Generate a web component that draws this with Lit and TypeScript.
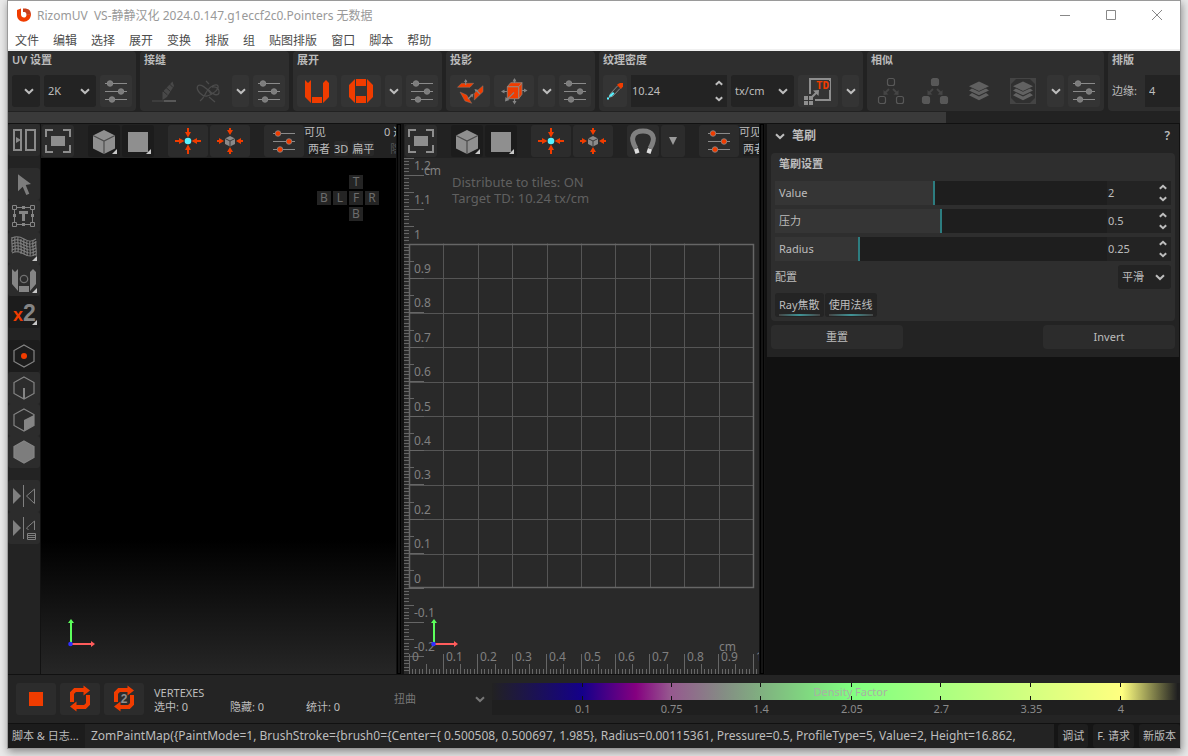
import { LitElement, html, svg, css, nothing } from "lit";
import type { TemplateResult, SVGTemplateResult } from "lit";
import { customElement, property } from "lit/decorators.js";
import { classMap } from "lit/directives/class-map.js";

const icon = (w: number, h: number, body: SVGTemplateResult) =>
  html`<svg class="icon" width=${w} height=${h} viewBox="0 0 ${w} ${h}" aria-hidden="true">${body}</svg>`;

const chevronDown = html`<svg class="chev" width="10" height="7" viewBox="0 0 10 7" aria-hidden="true">
  <path d="M1 1.2 5 5 9 1.2" fill="none" stroke="currentColor" stroke-width="2"/></svg>`;
const stepUp = html`<svg width="8" height="6" viewBox="0 0 8 6" aria-hidden="true">
  <path d="M.8 4.800 4 1.800 7.200 4.800" fill="none" stroke="currentColor" stroke-width="2"/></svg>`;
const stepDown = html`<svg width="8" height="6" viewBox="0 0 8 6" aria-hidden="true">
  <path d="M.8 1.200 4 4.200 7.200 1.200" fill="none" stroke="currentColor" stroke-width="2"/></svg>`;

const more = svg`<path d="M29 24v5h-5z" fill="#c8c8c8"/>`;

const sliders = (knob: string) => icon(32, 32, svg`
  <path d="M5 8.5h22M5 16.5h22M5 24.5h22" stroke="#8a8a8a"/>
  <g fill=${knob} stroke="#8a8a8a" stroke-width=".8">
    <circle cx="10" cy="8.5" r="2.8"/><circle cx="21" cy="16.5" r="2.8"/><circle cx="12" cy="24.5" r="2.8"/>
  </g>`);

const seamPen = icon(40, 32, svg`
  <path d="M8 26h12" stroke="#3d3d3d" stroke-width="2"/><path d="M20 26h12" stroke="#585858" stroke-width="2"/>
  <path d="m18.500 25 0-8 10-10.500 1.500 4.500-7 11z" fill="#484848"/>
  <path d="m19 16 4.500 4M22 12.500l4.500 4M25.500 9l3.500 3.500" stroke="#2e2e2e"/>`);
const seamAuto = icon(40, 32, svg`
  <g fill="none" stroke="#4b4b4b" stroke-width="1.300">
    <path d="M23 19C19 12 11 8 9.500 11.500S14 22 19 21c7-2 12-7 11-10s-8 0-11 5c-2 3-3 7-7 10M24 12c5-1 8 3 7 6s-7 2-10-3M21 22l6 5M18 6l3 3"/>
  </g>`);
const unfoldU = icon(40, 32, svg`<g fill="#f03c00">
  <path d="m8 5 3 3 3-3v23l-6-6zM26 8l3-3 3 3v14l-6 6z"/><path d="M15 22h10v6H15z"/></g>`);
const unfoldO = icon(40, 32, svg`<g fill="#f03c00">
  <path d="m8 10 6-6v24l-6-6zM26 4l6 6v12l-6 6z"/><path d="M15 4h10v7H15zM15 21h10v7H15z"/></g>`);
const projectPlanes = icon(40, 32, svg`
  <g fill="#f03c00" stroke="#8a7a70" stroke-width=".5">
    <path d="m7.500 12.300 4-4h12.200l-3.700 4zM10 17l6.700 3 5 8.300-6.700-2.300zM24.300 18.300l8.700-7.600v6l-8.700 8.300z"/></g>
  <g stroke="#858585" stroke-width="1.200" fill="#858585">
    <path d="M15.700 10V5M27 16l3 3M22 20l-4 4"/><path d="m14 7 1.700-3 1.700 3zM24.500 14l4 1-3 2zM23.500 18.500l-1 4-2.500-2.500z" stroke="none"/></g>`);
const projectCube = icon(40, 32, svg`
  <g fill="#f03c00" stroke="#9a8478" stroke-width=".8">
    <path d="M13.300 11.700h11.400v12H13.300zM13.300 11.700l3.400-4H28l-3.300 4zM24.700 11.700l3.300-4v11.600l-3.300 4.400z"/></g>
  <g stroke="#858585" stroke-width="1.200"><path d="M20.500 8V4M20.500 24v4M13 16.500H8M28 15.500h4M20 17.500l-7 7"/></g>
  <g fill="#858585"><path d="m18.500 6.500 2-3.500 2 3.500zM18.500 26l2 3.500 2-3.500zM10.500 14.500l-3.500 2 3.500 2zM30 13.500l3.500 2-3.500 2zM11.500 22l-.5 4.500 4.500-1.500z"/></g>`);
const eyedropper = icon(24, 32, svg`
  <path d="m15 9 2-1h3v3.500L18 14l-4-4z" fill="#f03c00"/>
  <path d="m14.500 11-7 7.500-1.500 4 4-1.500 7-7.500" fill="none" stroke="#a5a5a5" stroke-width=".7"/>
  <path d="m10 17 1.500 1.500-3 3-2.500.5.500-2z" fill="#59f2ff"/><path d="M4 22.500h2v2H4z" fill="#59f2ff"/>`);
const tdIcon = icon(40, 32, svg`
  <path d="M12 19V4h20v21H17" fill="none" stroke="#8e8e8e" stroke-width="2"/>
  <path d="M17 6h15v9H17z" fill="#353535"/>
  <text x="18" y="14" class="td" fill="#f03c00">TD</text>
  <path d="m14 22 5-5" stroke="#8e8e8e" stroke-width="2"/><path d="m15 15.500 6-.5-.5 6z" fill="#8e8e8e"/>
  <path d="M6 21h4v4H6zM11 21h4v4h-4zM6 26h4v4H6zM11 26h4v4h-4z" fill="#8e8e8e"/>`);
const similar = (fill: string) => icon(40, 32, svg`
  <g fill=${fill} stroke="#585858" stroke-width="1.200">
    <rect x="16.500" y="3.500" width="7" height="7" rx="2"/><rect x="7.500" y="21.500" width="7" height="7" rx="2"/><rect x="25.500" y="21.500" width="7" height="7" rx="2"/></g>
  <path d="m18 14-4 4M22 14l4 4" stroke="#454545" stroke-width="1.800"/>
  <path d="m12.500 15 0 5 5-.5zM27.500 15v5l-5-.5z" fill="#454545"/>`);
const layers = svg`<path d="m20 6.500 10 4.700-10 4.700-10-4.700z"/><path d="m13 13.500 7 3.300 7-3.300 3 2-10 4.800-10-4.800z"/><path d="m13 18 7 3.500 7-3.500 3 2.200-10 5-10-5z"/>`;
const stack = icon(40, 32, svg`<g fill="#606060">${layers}</g>`);
const stackBox = icon(40, 32, svg`<path d="M7 3h26v26H7z" fill="#444"/>
  <path d="M13 4h14l5 5v14l-5 5H13l-5-5V9z" fill="#303030"/><g fill="#626262">${layers}</g>`);

const panels = icon(32, 32, svg`<path d="M6 6h7v20H6zM18 6h9v20h-9z" fill="none" stroke="#8a8a8a" stroke-width="2"/>
  <path d="m8 13 5 3-5 3z" fill="#8a8a8a"/>`);
const frame = icon(32, 32, svg`<path d="M11 5H4v7M21 5h7v7M4 20v7h7M28 20v7h-7" fill="none" stroke="#8e8e8e" stroke-width="2"/>
  <path d="M9 11h14v10H9z" fill="#8e8e8e"/>`);
const cube = icon(32, 32, svg`<path d="m16 5 11 5.500v13L16 29 5 23.500v-13z" fill="#8f8f8f"/>
  <path d="m5 10.500 11 5.500 11-5.500M16 16v13" fill="none" stroke="#4c4c4c" stroke-width="1.200"/>${more}`);
const square = icon(32, 32, svg`<path d="M6 7h20v20H6z" fill="#8f8f8f"/>${more}`);
const focusPoint = icon(40, 32, svg`
  <g stroke="#f03c00" stroke-width="2"><path d="M20 3v5M20 29v-5M7 16h5M33 16h-5"/></g>
  <g fill="#f03c00"><path d="M17 7h6l-3 5.500zM17 25h6l-3-5.500zM11 13v6l5.500-3zM29 13v6l-5.500-3z"/></g>
  <circle cx="20" cy="16" r="3.300" fill="#59f2ff"/>`);
const focusCube = icon(40, 32, svg`
  <g stroke="#f03c00" stroke-width="2"><path d="M20 3v3M20 29v-3M7 16h3M33 16h-3"/></g>
  <g fill="#f03c00"><path d="M17 5h6l-3 5zM17 27h6l-3-5zM9 13v6l5-3zM31 13v6l-5-3z"/></g>
  <path d="m20 11 5 2.500v5.500L20 21.500 15 19v-5.500z" fill="#8a8a8a"/><path d="m15 13.500 5 2.500 5-2.500M20 16v5.500" fill="none" stroke="#3a3a3a"/>`);
const magnet = icon(32, 32, svg`<path d="M9 23.500C2 12 7 6 16 6s14 6 7 17.500" fill="none" stroke="#808080" stroke-width="5"/>
  <path d="m7 24.500 4-1.500 1.500 4.500-4 1.500zM25 24.500 21 23l-1.500 4.500 4 1.500z" fill="#ddd"/>`);
const triangle = icon(24, 32, svg`<path d="M8 12h8l-4 8z" fill="#9a9a9a"/>`);

const cursor = icon(32, 32, svg`<path d="m10 6.300 13 9.700-5.300 1 3.600 8.700-3 1.300-3.600-8.300-4.700 4.600z" fill="#7d7d7d"/>`);
const textBox = icon(32, 32, svg`
  <path d="M6.500 7.500h18v17h-18z" fill="none" stroke="#858585"/>
  <g fill="#2e2e2e" stroke="#858585"><path d="M4.500 5.500h4v4h-4zM22.500 5.500h4v4h-4zM4.500 22.500h4v4h-4zM22.500 22.500h4v4h-4z"/></g>
  <path d="M14 6h3v3h-3zM14 23h3v3h-3zM5 14h3v3H5zM23 14h3v3h-3zM11 11h9v3h-3v7h-3v-7h-3z" fill="#858585"/>`);
const mesh = icon(32, 32, svg`<g fill="none" stroke="#808080" stroke-width="1.100">
  ${[0, 3, 6, 9, 12, 15].map((d) => svg`<path d="M4 ${6 + d}c4-2 7-2 12 1s8 3 12 0"/>`)}
  ${[0, 3, 6, 9, 12, 15, 18, 21, 24].map((d) => svg`<path d="M${4 + d} ${d < 9 ? 5 : d < 15 ? 7 : 9}c-1 5 1 9 0 15"/>`)}
  </g>${more}`);
const snap = icon(32, 32, svg`<g fill="#858585"><path d="m4 5 3 3 3-3v22l-6-7zM22 8l3-3 3 3v12l-6 7z"/><path d="M11 22h10v6H11z"/></g>
  <circle cx="16" cy="15" r="3.700" fill="none" stroke="#707070" stroke-width="1.300"/>${more}`);
const timesTwo = icon(32, 32, svg`<text x="5" y="25" class="x2a" fill="#f03c00">x</text><text x="15" y="25" class="x2b" fill="#858585">2</text>${more}`);
const hex = (inner: SVGTemplateResult, fill = "none") => icon(32, 32, svg`
  <path d="m16 5 10 5.500v11L16 27 6 21.500v-11z" fill=${fill} stroke="#858585" stroke-width="1.200"/>${inner}`);
const symmetry = icon(32, 32, svg`<path d="m5 8 8 8-8 8z" fill="#808080"/><path d="M15.500 5v22" stroke="#808080"/>
  <path d="m26.500 9-8 7 8 7.500z" fill="none" stroke="#808080"/>`);
const symmetryList = icon(32, 32, svg`<path d="m5 8 8 8-8 8z" fill="#808080"/><path d="M15.500 5v22" stroke="#808080"/>
  <path d="M26.500 18V9l-8 7 2 2" fill="none" stroke="#808080"/>
  <path d="M19.500 21.500h8v6h-8zM20 23.500h7M20 25.500h7" fill="none" stroke="#808080"/>`);

const stop = icon(40, 32, svg`<path d="M13 9h14v14H13z" fill="#f03c00"/>`);
const loopBody = svg`<g fill="none" stroke="#f03c00" stroke-width="4"><path d="M12 19v-9l3-3h9M28 12v9l-3 3h-9"/></g>
  <path d="m23.500 2.500 6.500 5-6.500 5zM16.500 18.500l-6.500 5 6.500 5z" fill="#f03c00"/>`;
const loop = icon(40, 32, loopBody);
const loop2 = icon(40, 32, svg`${loopBody}<text x="20" y="20" text-anchor="middle" class="l2" fill="#8e8e8e">2</text>`);

const axes = html`<svg class="axes" width="32" height="32" viewBox="0 0 32 32" aria-hidden="true">
  <path d="M5 27V5" stroke="#5cff5c" stroke-width="2"/><path d="M2 6 5 2l3 4z" fill="#5cff5c"/>
  <path d="M5 27h21" stroke="#ff5c5c" stroke-width="2"/><path d="m25 24 4 3-4 3z" fill="#ff5c5c"/>
  <circle cx="4.500" cy="27" r="2.300" fill="#2f2fff"/></svg>`;

const base = css`
  * { box-sizing: border-box; }
  button, input, select {
    font: inherit; color: inherit; border: 0; margin: 0; padding: 0;
    background: none; border-radius: 0; outline: none; min-width: 0;
  }
  svg { display: block; flex: none; }
  .td { font: bold 11px "DejaVu Sans Mono", monospace; }
  .x2a { font: bold 18px "Liberation Sans", sans-serif; }
  .x2b { font: bold 23px "Liberation Sans", sans-serif; }
  .l2 { font: bold 12px "Liberation Sans", sans-serif; }
`;

@customElement("drop-down")
class DropDown extends LitElement {
  @property() label = "";
  @property() value = "";
  static styles = [base, css`
    :host { display: block; }
    .box { position: relative; height: 100%; background: #232323; border-radius: 3px; display: flex; }
    select { appearance: none; flex: 1; width: 100%; padding: 0 20px 0 4px; cursor: pointer; }
    .chev { position: absolute; right: 6px; top: 50%; margin-top: -3px; pointer-events: none; }
    :host([plain]) .box { background: none; color: #777; }
    :host([plain]) select { padding-left: 8px; }
    :host([plain]) .chev { right: 3px; }
  `];
  render() {
    return html`<div class="box"><select aria-label=${this.label}><option>${this.value}</option></select>${chevronDown}</div>`;
  }
}

@customElement("number-field")
class NumberField extends LitElement {
  @property() label = "";
  @property() value = "";
  static styles = [base, css`
    :host { display: flex; background: #232323; }
    input { flex: 1; padding-left: 1px; }
    :host([inset]) input { padding-left: 4px; }
    .steps { width: 16px; display: flex; flex-direction: column; }
    .steps button { flex: 1; display: flex; align-items: center; justify-content: center; }
  `];
  render() {
    return html`<input type="text" inputmode="decimal" aria-label=${this.label} .value=${this.value}>
      <div class="steps"><button aria-label="+">${stepUp}</button><button aria-label="-">${stepDown}</button></div>`;
  }
}

@customElement("slider-row")
class SliderRow extends LitElement {
  @property() label = "";
  @property() value = "";
  @property({ type: Number }) fraction = 0;
  static styles = [base, css`
    :host { display: grid; grid-template-columns: 1fr 64px; height: 24px; }
    .track { position: relative; display: flex; }
    label { position: absolute; left: 4px; top: 0; line-height: 24px; pointer-events: none; }
    input { appearance: none; width: 100%; height: 24px;
      background: linear-gradient(#353535, #353535) 0 0 / var(--fill) 100% no-repeat #1e1e1e; }
    input::-webkit-slider-thumb { appearance: none; width: 2px; height: 24px; background: #2d7d80; }
  `];
  render() {
    return html`<div class="track">
        <input id="s" type="range" min="0" max="1000" .value=${String(this.fraction * 1000)} style="--fill:${this.fraction * 100}%">
        <label for="s">${this.label}</label>
      </div>
      <number-field label=${this.label} value=${this.value}></number-field>`;
  }
}

type Tool = { art: TemplateResult; name: string; kind?: string; gap?: boolean };

const toolButton = (t: Tool) =>
  html`<button class=${classMap({ tool: true, [t.kind ?? "wide"]: true, gap: !!t.gap })} title=${t.name}>${t.art}</button>`;

const toolStyles = css`
  .tool { height: 32px; display: flex; align-items: center; justify-content: center; background: #2c2c2c; border-radius: 3px; flex: none; overflow: hidden; }
  .wide { width: 40px; }
  .narrow { width: 32px; }
  .slim { width: 24px; }
  .on { width: 32px; background: #1c1c1c; }
`;

@customElement("tool-group")
class ToolGroup extends LitElement {
  @property() heading = "";
  static styles = css`
    :host { display: flex; flex-direction: column; flex: none; background: #2e2e2e; border-radius: 4px; padding: 1px 4px 4px; height: 60px; }
    h2 { margin: 0; font-size: 11px; line-height: 16px; height: 23px; font-weight: 600; color: #bbb; }
    .row { display: flex; gap: 4px; height: 32px; }
  `;
  render() {
    return html`<h2>${this.heading}</h2><div class="row"><slot></slot></div>`;
  }
}

@customElement("view-bar")
class ViewBar extends LitElement {
  @property({ type: Boolean }) uv = false;
  static styles = [base, toolStyles, css`
    :host { display: flex; height: 34px; padding: 1px 0 0 1px; background: #222; overflow: hidden; gap: 2px; flex: none; }
    .gap { margin-left: 12px; }
    .info { display: flex; flex-direction: column; flex: none; margin-left: -2px; white-space: nowrap; }
    .line { display: flex; height: 16px; line-height: 14px; }
    .count { margin-left: 58px; }
    .modes { padding-left: 4px; gap: 4px; }
    .modes button { height: 15px; line-height: 15px; background: #292929; border-radius: 2px; }
    .modes .sel { background: #1c1c1c; }
    .modes .last { margin-left: 12px; background: none; color: #555; }
  `];
  render() {
    return html`
      ${toolButton({ art: frame, name: "Frame", kind: "narrow" })}
      ${toolButton({ art: cube, name: "Shading", kind: "on", gap: true })}
      ${toolButton({ art: square, name: "Fill", kind: "on" })}
      ${toolButton({ art: focusPoint, name: "Center", gap: true })}
      ${toolButton({ art: focusCube, name: "Fit" })}
      ${this.uv ? html`${toolButton({ art: magnet, name: "Snap", kind: "narrow", gap: true })}${toolButton({ art: triangle, name: "Snap options", kind: "slim" })}` : nothing}
      ${toolButton({ art: sliders("#f03c00"), name: "Options", gap: true })}
      <div class="info">
        <div class="line"><span>可见</span><span class="count">0 选中</span></div>
        <div class="line modes"><button class="sel">两者</button><button>3D</button><button>扁平</button><button class="last">隐藏</button></div>
      </div>`;
  }
}

@customElement("uv-canvas")
class UvCanvas extends LitElement {
  static styles = css`
    :host { display: block; flex: 1; min-height: 0; background: #292929; overflow: hidden; }
    svg { display: block; width: 100%; height: 100%; }
    text { font-family: "Noto Sans", sans-serif; font-size: 12px; fill: #808080; }
    .note { font-size: 13px; fill: #606060; }
  `;
  render() {
    const step = 34.4;
    const ox = 5.5;
    const oy = 429.5;
    const ticks: SVGTemplateResult[] = [];
    const length = (i: number) => (i % 10 === 0 ? 20 : i % 5 === 0 ? 10 : 5);
    for (let i = -25; i <= 125; i++) {
      const y = Math.round(oy - (i * step) / 10) + 0.5;
      ticks.push(svg`<path d="M0 ${y}h${length(i)}"/>`);
    }
    for (let i = 0; i <= 102; i++) {
      const x = Math.round(ox + (i * step) / 10) - 0.5;
      ticks.push(svg`<path d="M${x} 516v-${length(i)}"/>`);
    }
    const lines: SVGTemplateResult[] = [];
    for (let i = 1; i < 10; i++) {
      const d = Math.round(i * step);
      lines.push(svg`<path d="M${ox + d} ${oy}v-344M${ox} ${oy - d + 1}h344"/>`);
    }
    const label = (i: number) => (i % 10 === 0 ? String(i / 10) : (i / 10).toFixed(1));
    return html`<svg>
      <g stroke="#555">${lines}</g>
      <rect x="5.500" y="86.500" width="344" height="343" fill="none" stroke="#666" stroke-width="1.500"/>
      <g stroke="#666">${ticks}</g>
      ${[-2, -1, 0, 1, 2, 3, 4, 5, 6, 7, 8, 9, 10, 11, 12].map((i) => svg`<text x="10" y=${Math.round(oy - i * step - 5)}>${label(i)}</text>`)}
      ${[0, 1, 2, 3, 4, 5, 6, 7, 8, 9, 10].map((i) => svg`<text x=${Math.round(ox + i * step + 2)} y="503">${label(i)}</text>`)}
      <text x="20" y="17">cm</text><text x="315" y="493">cm</text>
      <text class="note" x="48" y="29">Distribute to tiles: ON</text>
      <text class="note" x="48" y="45">Target TD: 10.24 tx/cm</text>
    </svg>`;
  }
}

@customElement("app-root")
class AppRoot extends LitElement {
  static styles = [base, toolStyles, css`
    :host {
      display: block; height: 100vh; overflow: hidden; padding: 0 7px 7px; box-sizing: border-box; background: #e9e9e9;
      font: 11px/16px "Noto Sans", "Noto Sans CJK SC", sans-serif; color: #bdbdbd;
    }
    .window { height: 100%; display: flex; flex-direction: column; border: 1px solid #9a9a9a; background: #222; box-shadow: 1px 3px 8px rgba(0, 0, 0, .4); }
    .title { height: 28px; flex: none; background: #fff; display: flex; align-items: center; color: #999; font-size: 12px; }
    .title .name { flex: 1; white-space: pre; padding: 2px 0 0 5px; }
    .title .logo { margin-left: 8px; }
    .title button { width: 46px; height: 28px; display: flex; align-items: center; justify-content: center; }
    .menu { height: 22px; flex: none; background: #fff; border-bottom: 2px solid #f0f0f0; display: flex; gap: 14px; padding: 4px 7px 0; color: #4c4c4c; font-size: 12px; line-height: 16px; }
    .ribbon { display: flex; gap: 4px; height: 61px; flex: none; overflow: hidden; }
    .ribbon tool-group:first-child { border-radius: 0 4px 4px 0; }
    .ribbon .tool { background: #343434; }
    .ribbon .off { width: 40px; background: none; }
    .ribbon .tiny { width: 17px; }
    .s28 { width: 28px; } .s52 { width: 52px; } .s63 { width: 63px; } .n96 { width: 96px; }
    .edge { display: flex; align-items: center; width: 29px; }
    .scroll { height: 12px; flex: none; border-bottom: 1px solid #111; background: #222; }
    .thumb { width: 80%; height: 11px; background: #3a3a3a; }
    main { flex: 1; min-height: 0; display: grid; grid-template-columns: 33px 355fr 8px 355fr 8px 413fr; border-bottom: 1px solid #111; }
    .side { background: #232323; border-right: 1px solid #121212; display: flex; flex-direction: column; }
    .side .gap { margin-top: 12px; }
    .view { position: relative; display: flex; flex-direction: column; min-width: 0; min-height: 0; overflow: hidden; }
    .space { flex: 1; background: linear-gradient(#000 74%, #262626); }
    .axes { position: absolute; left: 25px; bottom: 25px; }
    .compass { position: absolute; top: 51px; right: 17px; display: grid; grid-template-columns: repeat(4, 14px); grid-auto-rows: 14px; gap: 2px; }
    .compass button { background: #242424; color: #6c6c6c; font-size: 12px; line-height: 14px; text-align: center; }
    .mid { grid-column: 3; } .left { grid-column: 1; }
    .split { background: #151515; border: solid #111; border-width: 0 2px 0 1px; }
    .split i { display: block; width: 4px; height: 100%; border: 1px solid #000; }
    .dock { background: #111; border-right: 1px solid #111; min-width: 0; }
    .panel { background: #232323; padding: 0 4px 8px; }
    .head { height: 29px; display: flex; align-items: center; padding: 0 5px 5px 4px; font-size: 12px; font-weight: 600; }
    .head b { flex: 1; padding-left: 7px; font-weight: 600; }
    .fields { background: #2e2e2e; border-radius: 4px; padding: 0 4px 4px; display: flex; flex-direction: column; gap: 4px; }
    .fields h3 { margin: 0; padding: 3px 4px 0; height: 24px; font-size: 11px; line-height: 16px; font-weight: 600; }
    .line { display: flex; justify-content: space-between; align-items: center; height: 24px; }
    .line drop-down { width: 53px; height: 24px; }
    .toggles { display: flex; gap: 1px; height: 24px; }
    .toggles button { background: #242424; border-radius: 3px; padding: 2px 4px 0; display: flex; flex-direction: column; justify-content: center; line-height: 18px; }
    .toggles button::after { content: ""; width: 100%; height: 2px; background: linear-gradient(90deg, #444, #3f9497, #444); }
    .actions { display: grid; grid-template-columns: repeat(3, 1fr); gap: 4px; padding-top: 4px; }
    .actions button { height: 24px; background: #2c2c2c; border-radius: 4px; }
    .actions button:last-child { grid-column: 3; }
    .foot { height: 49px; flex: none; display: flex; align-items: flex-start; gap: 4px; padding: 8px 0 0 8px; border-bottom: 1px solid #111; background: #242424; }
    .stats { display: grid; grid-template-columns: repeat(3, 76px); padding: 3px 0 0 6px; line-height: 14px; flex: none; }
    .stats b { grid-column: 1 / 4; font-weight: 400; }
    .foot drop-down { width: 102px; height: 32px; flex: none; }
    .density { flex: 1; height: 32px; background: #1f1f1f; position: relative; color: #8a8a8a; }
    .ramp { height: 17px; line-height: 17px; margin-right: 3px; text-align: center; color: #a9b0a4; padding-left: 32px;
      background: linear-gradient(90deg, #222, #14008a 13.200%, #850080 21%, #96588f 26%, #848e84 34%, #80b080 39.300%, #80ff80 52.500%, #ffff80 92%, #222); }
    .scale { position: absolute; inset: 0; }
    .mark { position: absolute; top: 0; width: 40px; margin-left: -20px; height: 32px; padding-top: 18px; text-align: center; line-height: 16px; }
    .mark::before { content: ""; position: absolute; left: 19px; top: 0; width: 1px; height: 17px;
      background: linear-gradient(#111 4px, transparent 4px 13px, #111 13px); }
    .status { height: 24px; flex: none; display: flex; background: #151515; line-height: 24px; }
    .status .log { width: 77px; background: #1c1c1c; text-align: left; padding-left: 4px; flex: none; white-space: nowrap; }
    .status output { flex: 1; min-width: 0; background: #232323; overflow: hidden; white-space: nowrap; font-size: 12px; padding-left: 6px; }
    .status .end { display: flex; gap: 5px; padding-left: 4px; flex: none; }
    .status .end button { background: #1e1e1e; border-radius: 3px; padding: 0 4px; }
  `];

  private sideTools: Tool[] = [
    { art: panels, name: "Layout", kind: "narrow" },
    { art: cursor, name: "Select", kind: "narrow", gap: true },
    { art: textBox, name: "Transform", kind: "narrow" },
    { art: mesh, name: "Deform", kind: "narrow" },
    { art: snap, name: "Unfold brush", kind: "narrow" },
    { art: timesTwo, name: "Density brush", kind: "on" },
    { art: hex(svg`<circle cx="16" cy="16" r="3" fill="#f03c00"/>`), name: "Vertex", kind: "on", gap: true },
    { art: hex(svg`<path d="M16 16v11" stroke="#858585" stroke-width="2"/>`), name: "Edge", kind: "narrow" },
    { art: hex(svg`<path d="m16 16 10-5v10.500L16 27z" fill="#858585"/>`), name: "Polygon", kind: "narrow" },
    { art: hex(svg``, "#7d7d7d"), name: "Island", kind: "narrow" },
    { art: symmetry, name: "Symmetry", kind: "narrow", gap: true },
    { art: symmetryList, name: "Symmetry options", kind: "narrow" },
  ];

  private tools(...list: Tool[]) {
    return html`${list.map(toolButton)}${toolButton({ art: chevronDown, name: "More", kind: "tiny" })}${toolButton({ art: sliders("#7c7c7c"), name: "Options", kind: "narrow" })}`;
  }

  render() {
    const menus = ["文件", "编辑", "选择", "展开", "变换", "排版", "组", "贴图排版", "窗口", "脚本", "帮助"];
    const marks = [[0.1, 13.2], [0.75, 26.1], [1.4, 39.1], [2.05, 52.3], [2.7, 65.3], [3.35, 78.4], [4, 91.4]];
    return html`<div class="window">
      <header class="title">
        <svg class="logo" width="16" height="16" viewBox="0 0 16 16" aria-hidden="true">
          <path d="M1 3 5 1.500v6c0 4 5.500 4 5.500.500L15 7c0 10-14 10-14 1z" fill="#f03c00"/>
          <path d="M7 1.500c5-.5 8 1.500 8 6L10.500 8C10.500 5.500 9.500 5 7 5z" fill="#c8401c"/></svg>
        <span class="name">RizomUV  VS-静静汉化 2024.0.147.g1eccf2c0.Pointers 无数据</span>
        <button aria-label="Minimize">${icon(12, 12, svg`<path d="M1 6.500h10" stroke="#888"/>`)}</button>
        <button aria-label="Maximize">${icon(12, 12, svg`<path d="M1.500 1.500h9v9h-9z" fill="none" stroke="#888"/>`)}</button>
        <button aria-label="Close">${icon(12, 12, svg`<path d="m1 1 10 10M11 1 1 11" stroke="#888"/>`)}</button>
      </header>
      <nav class="menu">${menus.map((m) => html`<button>${m}</button>`)}</nav>

      <section class="ribbon">
        <tool-group heading="UV 设置">
          <drop-down class="s28" label="UV"></drop-down>
          <drop-down class="s52" label="Map size" value="2K"></drop-down>
          ${toolButton({ art: sliders("#7c7c7c"), name: "Options", kind: "narrow" })}
        </tool-group>
        <tool-group heading="接缝">${this.tools({ art: seamPen, name: "Cut", kind: "off" }, { art: seamAuto, name: "Auto seams", kind: "off" })}</tool-group>
        <tool-group heading="展开">${this.tools({ art: unfoldU, name: "Unfold" }, { art: unfoldO, name: "Optimize" })}</tool-group>
        <tool-group heading="投影">${this.tools({ art: projectPlanes, name: "Planar" }, { art: projectCube, name: "Box" })}</tool-group>
        <tool-group heading="纹理密度">
          ${toolButton({ art: eyedropper, name: "Pick", kind: "slim" })}
          <number-field class="n96" label="纹理密度" value="10.24"></number-field>
          <drop-down class="s63" label="Unit" value="tx/cm"></drop-down>
          ${toolButton({ art: tdIcon, name: "Apply" })}${toolButton({ art: chevronDown, name: "More", kind: "tiny" })}
        </tool-group>
        <tool-group heading="相似">${this.tools(
          { art: similar("none"), name: "Select similar", kind: "off" }, { art: similar("#585858"), name: "Group similar", kind: "off" },
          { art: stack, name: "Stack", kind: "off" }, { art: stackBox, name: "Stack in box", kind: "off" })}</tool-group>
        <tool-group heading="排版"><span class="edge">边缘:</span><number-field inset class="n96" label="边缘" value="4"></number-field></tool-group>
      </section>
      <div class="scroll"><div class="thumb"></div></div>

      <main>
        <aside class="side">${this.sideTools.map(toolButton)}</aside>
        <section class="view">
          <view-bar></view-bar>
          <div class="space"></div>
          <div class="compass"><button class="mid">T</button><button class="left">B</button><button>L</button><button>F</button><button>R</button><button class="mid">B</button></div>
          ${axes}
        </section>
        <div class="split"><i></i></div>
        <section class="view"><view-bar uv></view-bar><uv-canvas></uv-canvas>${axes}</section>
        <div class="split"><i></i></div>
        <aside class="dock">
          <div class="panel">
            <div class="head">${chevronDown}<b>笔刷</b><button aria-label="Help">?</button></div>
            <div class="fields">
              <h3>笔刷设置</h3>
              <slider-row label="Value" value="2" fraction="0.479"></slider-row>
              <slider-row label="压力" value="0.5" fraction="0.5"></slider-row>
              <slider-row label="Radius" value="0.25" fraction="0.25"></slider-row>
              <div class="line"><span>配置</span><drop-down label="配置" value="平滑"></drop-down></div>
              <div class="toggles"><button>Ray焦散</button><button>使用法线</button></div>
            </div>
            <div class="actions"><button>重置</button><button>Invert</button></div>
          </div>
        </aside>
      </main>

      <section class="foot">
        ${toolButton({ art: stop, name: "Stop" })}${toolButton({ art: loop, name: "Loop" })}${toolButton({ art: loop2, name: "Loop twice" })}
        <div class="stats"><b>VERTEXES</b><span>选中: 0</span><span>隐藏: 0</span><span>统计: 0</span></div>
        <drop-down plain label="Color mode" value="扭曲"></drop-down>
        <div class="density">
          <div class="ramp">Density Factor</div>
          <div class="scale">${marks.map(([n, at]) => html`<span class="mark" style="left:${at}%">${n}</span>`)}</div>
        </div>
      </section>
      <footer class="status">
        <button class="log">脚本 &amp; 日志...</button>
        <output>ZomPaintMap({PaintMode=1, BrushStroke={brush0={Center={ 0.500508, 0.500697, 1.985}, Radius=0.00115361, Pressure=0.5, ProfileType=5, Value=2, Height=16.862,</output>
        <div class="end"><button>调试</button><button>F. 请求</button><button>新版本</button></div>
      </footer>
    </div>`;
  }
}
